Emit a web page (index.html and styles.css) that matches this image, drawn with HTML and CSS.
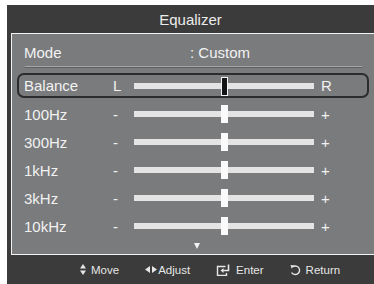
FILE: index.html
```html
<!DOCTYPE html>
<html>
<head>
    <meta charset="UTF-8">
    <title>Equalizer</title>
    <link rel="stylesheet" href="styles.css">
</head>
<body>
    <div class="screen">
        <header class="title">Equalizer</header>

        <div class="panel">
            <div class="mode-row">
                <span class="label">Mode</span>
                <span class="mode-value">: Custom</span>
            </div>
            <div class="separator"></div>

            <div class="row selected">
                <span class="label">Balance</span>
                <span class="sign">L</span>
                <div class="bar"><span class="thumb dark"></span></div>
                <span class="sign end">R</span>
            </div>
            <div class="row">
                <span class="label">100Hz</span>
                <span class="sign">-</span>
                <div class="bar"><span class="thumb"></span></div>
                <span class="sign end">+</span>
            </div>
            <div class="row">
                <span class="label">300Hz</span>
                <span class="sign">-</span>
                <div class="bar"><span class="thumb"></span></div>
                <span class="sign end">+</span>
            </div>
            <div class="row">
                <span class="label">1kHz</span>
                <span class="sign">-</span>
                <div class="bar"><span class="thumb"></span></div>
                <span class="sign end">+</span>
            </div>
            <div class="row">
                <span class="label">3kHz</span>
                <span class="sign">-</span>
                <div class="bar"><span class="thumb"></span></div>
                <span class="sign end">+</span>
            </div>
            <div class="row">
                <span class="label">10kHz</span>
                <span class="sign">-</span>
                <div class="bar"><span class="thumb"></span></div>
                <span class="sign end">+</span>
            </div>

            <div class="more">
                <svg width="6" height="6" viewBox="0 0 6 6"><path d="M0 0H6L3 6Z" fill="#f4f4f4"/></svg>
            </div>
        </div>

        <footer class="help">
            <span class="hint">
                <svg width="6" height="11" viewBox="0 0 6 11"><path d="M3 0L6 4.5H0Z M0 6.5H6L3 11Z" fill="#e6e6e6"/></svg>
                Move
            </span>
            <span class="hint adjust">
                <svg width="12" height="7" viewBox="0 0 12 7"><path d="M0 3.5L5 0V7Z M12 3.5L7 0V7Z" fill="#e6e6e6"/></svg>
                Adjust
            </span>
            <span class="hint">
                <svg width="15" height="12" viewBox="0 0 15 12"><path d="M9.5 2.5H1.5V11.5H10.5V9" fill="none" stroke="#e6e6e6" stroke-width="1.4"/><path d="M12.5 0.5V6.5H6.5" fill="none" stroke="#e6e6e6" stroke-width="1.6"/><path d="M4.5 6.5L7.5 4V9Z" fill="#e6e6e6"/></svg>
                Enter
            </span>
            <span class="hint">
                <svg width="11" height="12" viewBox="0 0 11 12"><path d="M3 2.6A4.3 4.3 0 1 1 1.6 8.5" fill="none" stroke="#e6e6e6" stroke-width="1.4"/><path d="M0.5 1L4.8 1.6L1.6 4.6Z" fill="#e6e6e6"/></svg>
                Return
            </span>
        </footer>
    </div>
</body>
</html>
```

FILE: styles.css
```css
body {
    margin: 0;
    background-color: #ffffff;
    font-family: "Liberation Sans", Arial, sans-serif;
    overflow: hidden;
}
.screen {
    margin: 5px 0 0 7px;
    height: 279px;
    background-color: #3b3b3b;
    display: flex;
    flex-direction: column;
}
.title {
    height: 28px;
    line-height: 29px;
    text-align: center;
    color: #ececec;
    font-size: 15px;
}
.panel {
    margin-left: 4px;
    background-color: #7a7b7d;
    border: 1px solid #f2f2f2;
    border-right: none;
    padding-top: 4px;
    height: 216px;
}
.mode-row {
    height: 28px;
    display: flex;
    align-items: center;
    padding-left: 12px;
    color: #f2f2f2;
    font-size: 15px;
}
.mode-row .label {
    width: 166px;
}
.separator {
    height: 1px;
    margin: 0 12px 0 13px;
    background-color: #a5a6a8;
    border-bottom: 1px solid #5f6062;
}
.row {
    height: 28px;
    display: flex;
    align-items: center;
    padding-left: 12px;
    color: #f2f2f2;
    font-size: 15px;
}
.row .label {
    width: 89px;
}
.sign {
    width: 21px;
}
.sign.end {
    margin-left: 7px;
}
.row.selected {
    height: 21px;
    margin: 5px 5px 2px 5px;
    padding-left: 5px;
    border: 2px solid #2c2c2c;
    border-radius: 7px;
}
.bar {
    position: relative;
    width: 180px;
    height: 6px;
    background-color: #e4e4e4;
}
.thumb {
    position: absolute;
    left: 87px;
    top: -6px;
    width: 7px;
    height: 18px;
    background-color: #fafafa;
}
.thumb.dark {
    top: -6px;
    width: 5px;
    height: 17px;
    background-color: #141414;
    border: 1px solid #f4f4f4;
}
.more {
    display: flex;
    justify-content: center;
    padding: 3px 0 0 8px;
    line-height: 0;
}
.help {
    flex: 1;
    display: flex;
    align-items: center;
    padding-left: 73px;
    gap: 26px;
    color: #e6e6e6;
    font-size: 11.5px;
}
.hint {
    display: flex;
    align-items: center;
    gap: 5px;
}
.hint.adjust {
    gap: 1px;
}
```
